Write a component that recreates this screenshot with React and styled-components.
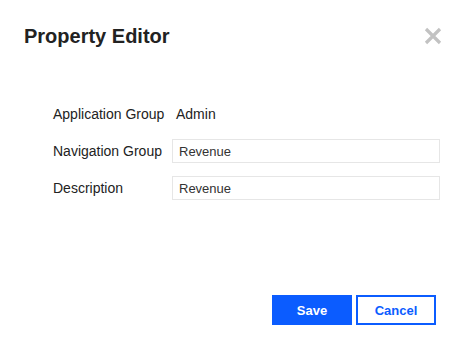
import React from 'react';
import styled, { createGlobalStyle } from 'styled-components';

const GlobalStyle = createGlobalStyle`
  html, body {
    margin: 0;
    padding: 0;
    background: #fff;
  }
  body {
    font-family: Arial, "Liberation Sans", sans-serif;
    color: #222;
  }
`;

const Dialog = styled.div`
  width: 472px;
  height: 337px;
  box-sizing: border-box;
  display: flex;
  flex-direction: column;
  background: #fff;
`;

const Header = styled.div`
  display: flex;
  align-items: center;
  justify-content: space-between;
  padding: 24px 30px 0 24px;
  height: 24px;
`;

const Title = styled.h2`
  margin: 0;
  font-size: 20px;
  font-weight: bold;
  color: #222;
`;

const CloseButton = styled.button`
  border: 0;
  background: none;
  padding: 0;
  width: 18px;
  height: 18px;
  cursor: pointer;
  display: flex;
`;

const Form = styled.div`
  display: grid;
  grid-template-columns: 119px 268px;
  grid-auto-rows: 24px;
  row-gap: 13px;
  align-items: center;
  padding: 54px 0 0 53px;
  flex: 1;
  align-content: start;
`;

const Label = styled.span`
  font-size: 14px;
  color: #222;
`;

const Value = styled.span`
  font-size: 14px;
  color: #222;
  padding-left: 4px;
`;

const Input = styled.input`
  box-sizing: border-box;
  width: 268px;
  height: 24px;
  border: 1px solid #e6e6e6;
  padding: 0 6px;
  font-family: Arial, "Liberation Sans", sans-serif;
  font-size: 13px;
  color: #333;
  outline: none;
`;

const Footer = styled.div`
  display: flex;
  justify-content: flex-end;
  gap: 4px;
  padding: 0 36px 12px 0;
`;

const Button = styled.button`
  box-sizing: border-box;
  width: 80px;
  height: 30px;
  font-family: Arial, "Liberation Sans", sans-serif;
  font-size: 13px;
  font-weight: bold;
  cursor: pointer;
  border: 2px solid #0b5cff;
  background: ${p => (p.$primary ? '#0b5cff' : '#fff')};
  color: ${p => (p.$primary ? '#fff' : '#0b5cff')};
`;

const CloseIcon = () => (
  <svg width="18" height="18" viewBox="0 0 18 18">
    <path d="M2 2 L16 16 M16 2 L2 16" stroke="#c2c2c2" strokeWidth="3.2" />
  </svg>
);

export default function App() {
  return (
    <>
      <GlobalStyle />
      <Dialog>
        <Header>
          <Title>Property Editor</Title>
          <CloseButton aria-label="Close">
            <CloseIcon />
          </CloseButton>
        </Header>
        <Form>
          <Label>Application Group</Label>
          <Value>Admin</Value>
          <Label>Navigation Group</Label>
          <Input defaultValue="Revenue" />
          <Label>Description</Label>
          <Input defaultValue="Revenue" />
        </Form>
        <Footer>
          <Button $primary>Save</Button>
          <Button>Cancel</Button>
        </Footer>
      </Dialog>
    </>
  );
}
